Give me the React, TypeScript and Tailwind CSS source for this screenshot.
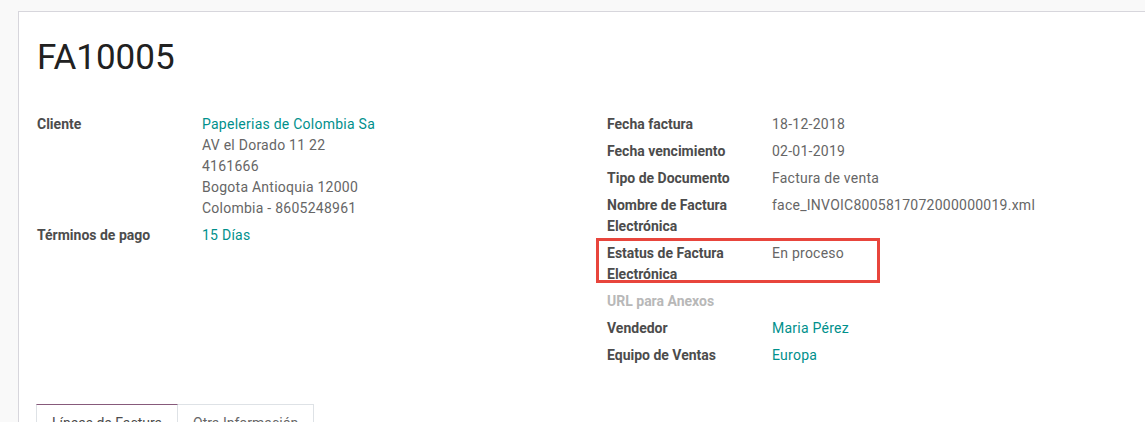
const font = { fontFamily: "Roboto, 'Liberation Sans', sans-serif" };

type Row = {
    label: string;
    value?: string[];
    link?: boolean;
    empty?: boolean;
    marked?: boolean;
};

const leftRows: Row[] = [
    {
        label: "Cliente",
        value: [
            "Papelerias de Colombia Sa",
            "AV el Dorado 11 22",
            "4161666",
            "Bogota Antioquia 12000",
            "Colombia - 8605248961",
        ],
        link: true,
    },
    { label: "Términos de pago", value: ["15 Días"], link: true },
];

const rightRows: Row[] = [
    { label: "Fecha factura", value: ["18-12-2018"] },
    { label: "Fecha vencimiento", value: ["02-01-2019"] },
    { label: "Tipo de Documento", value: ["Factura de venta"] },
    { label: "Nombre de Factura Electrónica", value: ["face_INVOIC8005817072000000019.xml"] },
    { label: "Estatus de Factura Electrónica", value: ["En proceso"], marked: true },
    { label: "URL para Anexos", empty: true },
    { label: "Vendedor", value: ["Maria Pérez"], link: true },
    { label: "Equipo de Ventas", value: ["Europa"], link: true },
];

function FieldRow({ row }: { row: Row }) {
    return (
        <div className="relative flex py-[3px]">
            {row.marked && (
                <span className="pointer-events-none absolute left-[-11px] top-[-2px] h-[45px] w-[284px] border-[3px] border-[#e8453c]" />
            )}
            <div
                className={`w-[165px] shrink-0 pr-[15px] font-bold ${
                    row.empty ? "text-[#b8b8b8]" : "text-[#4c4c4c]"
                }`}
            >
                {row.label}
            </div>
            <div className="flex flex-col tracking-[0.25px]">
                {row.value?.map((line, i) => (
                    <span
                        key={i}
                        className={row.link && i === 0 ? "text-[#00908c]" : "text-[#666666]"}
                    >
                        {line}
                    </span>
                ))}
            </div>
        </div>
    );
}

export default function App() {
    return (
        <div
            className="h-[422px] w-[1145px] overflow-hidden bg-[#f9f9f9] pl-[18px] pt-[11px]"
            style={font}
        >
            <div className="h-[500px] w-[1200px] border border-[#d7d6dc] bg-white pl-[18px] pt-[26px]">
                {/* TITLE */}
                <h1 className="text-[35px] leading-[40px] text-[#212121]">FA10005</h1>

                {/* GROUPS */}
                <div className="mt-[33px] grid grid-cols-[570px_570px] text-[14px] leading-[21px]">
                    <div className="flex flex-col">
                        {leftRows.map((row) => (
                            <FieldRow key={row.label} row={row} />
                        ))}
                    </div>
                    <div className="flex flex-col">
                        {rightRows.map((row) => (
                            <FieldRow key={row.label} row={row} />
                        ))}
                    </div>
                </div>

                {/* TABS */}
                <div className="ml-[-1px] mt-[35px] flex border-b border-[#dee2e6] text-[14px] leading-[21px]">
                    <div className="border-x border-t border-[#dee2e6] border-t-[#875a7b] px-[15px] pb-[8px] pt-[8px] text-[#4c4c4c]">
                        Líneas de Factura
                    </div>
                    <div className="border-r border-t border-[#dee2e6] px-[15px] pb-[8px] pt-[8px] text-[#666666]">
                        Otra Información
                    </div>
                </div>
            </div>
        </div>
    );
}
